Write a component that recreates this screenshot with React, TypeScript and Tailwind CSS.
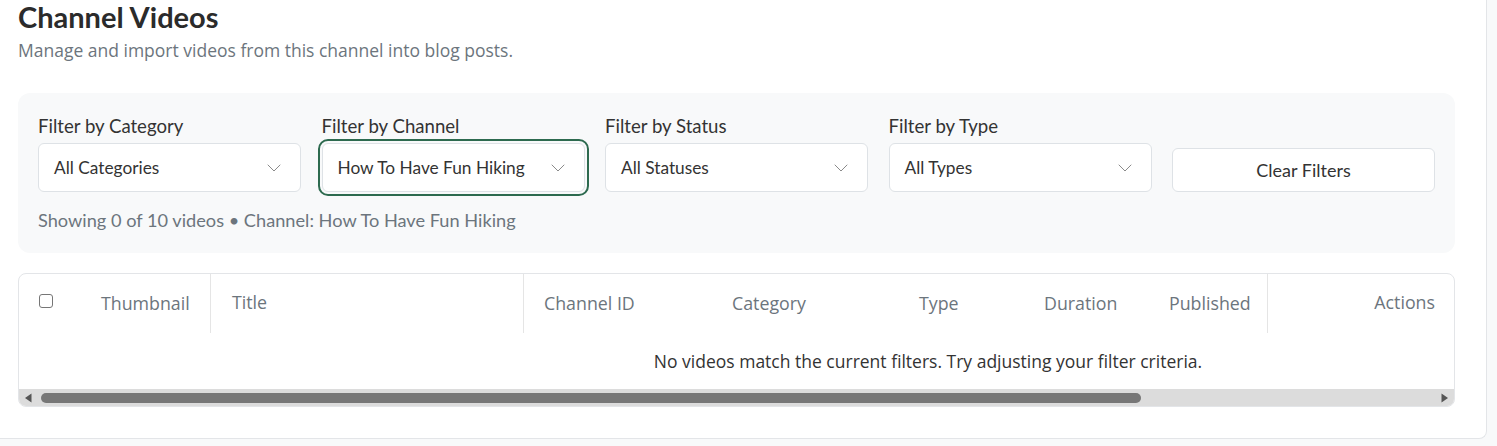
import { ChevronDown } from "lucide-react";

const filters = [
  { label: "Filter by Category", value: "All Categories" },
  { label: "Filter by Channel", value: "How To Have Fun Hiking", focused: true },
  { label: "Filter by Status", value: "All Statuses" },
  { label: "Filter by Type", value: "All Types" },
];

const lato = "font-['Lato','Open_Sans',sans-serif]";
const openSans = "font-['Open_Sans','Lato',sans-serif]";

function Select({ value, focused }: { value: string; focused?: boolean }) {
  return (
    <div
      className={`flex h-[49px] items-center justify-between rounded-md border border-[#dee2e6] bg-white pl-[15px] pr-[14px] text-[17.3px] text-[#333] ${
        focused ? "outline-2 outline-offset-2 outline-[#2d6a4f]" : ""
      }`}
    >
      <span>{value}</span>
      <ChevronDown className="h-6 w-6 text-[#8a8a8a]" strokeWidth={1} aria-hidden="true" />
    </div>
  );
}

export default function App() {
  return (
    <div className="h-[446px] w-[1497px] overflow-hidden bg-[#f8f9fa]">
      <div className="h-[439px] w-[1487px] rounded-br-lg border-r border-b border-[#e3e5e8] bg-white pt-[2px] pl-[18px] pr-[31px]">
        {/* Header */}
        <h1 className={`${lato} text-[29px] leading-[30px] font-bold text-[#2b2b2b]`}>
          Channel Videos
        </h1>
        <p className={`${openSans} mt-[5px] text-[17.5px] leading-[26px] text-[#6c757d]`}>
          Manage and import videos from this channel into blog posts.
        </p>

        {/* Filters */}
        <div className={`${lato} mt-[30px] rounded-xl bg-[#f8f9fa] px-5 pt-[21px] pb-[21px]`}>
          <div className="grid grid-cols-5 items-end gap-x-[20.5px]">
            {filters.map((f) => (
              <div key={f.label}>
                <label className="mb-[5px] block text-[18.6px] leading-[24px] text-[#333]">{f.label}</label>
                <Select value={f.value} focused={f.focused} />
              </div>
            ))}
            <button className="h-[44px] rounded-md border border-[#dee2e6] bg-white text-[18px] text-[#333]">
              Clear Filters
            </button>
          </div>
          <p className="mt-[16px] text-[18.2px] leading-6 text-[#6c757d]">
            Showing 0 of 10 videos • Channel: How To Have Fun Hiking
          </p>
        </div>

        {/* Table */}
        <div className={`${openSans} mt-5 overflow-hidden rounded-lg border border-[#e3e5e8]`}>
          <div className="w-[1818px]">
            <div className="flex h-[59px] items-center text-[17.8px] text-[#6c757d]">
              <div className="flex w-[62px] items-center pl-[20px]">
                <span className="-mt-[6px] block h-[14px] w-[14px] rounded-[3px] border border-[#767676] bg-white" />
              </div>
              <div className="w-[129px] pl-5">Thumbnail</div>
              <div className="h-full w-[313px] border-l border-[#e5e5e5] pl-[21px] leading-[57px]">Title</div>
              <div className="h-full w-[188px] border-l border-[#e5e5e5] pl-[20px] leading-[59px]">Channel ID</div>
              <div className="w-[187px] pl-[21px]">Category</div>
              <div className="w-[125px] pl-[21px]">Type</div>
              <div className="w-[125px] pl-[21px]">Duration</div>
              <div className="w-[119px] pl-[21px]">Published</div>
              <div className="h-full w-[188px] border-l border-[#e5e5e5] pr-[20px] text-right leading-[57px]">Actions</div>
              <div className="flex-1" />
            </div>
            <div className="flex h-[56px] items-center justify-center text-[17.5px] text-[#333]">
              No videos match the current filters. Try adjusting your filter criteria.
            </div>
          </div>
          {/* scrollbar */}
          <div className="flex h-[17px] items-center bg-[#dcdcdc] px-[5px]">
            <svg width="8" height="10" viewBox="0 0 8 10" aria-hidden="true">
              <path d="M7.5 0.5 L1 5 L7.5 9.5 Z" fill="#555" />
            </svg>
            <div className="ml-[9px] h-[10px] w-[1100px] rounded-full bg-[#777]" />
            <div className="flex-1" />
            <svg width="8" height="10" viewBox="0 0 8 10" aria-hidden="true">
              <path d="M0.5 0.5 L7 5 L0.5 9.5 Z" fill="#555" />
            </svg>
          </div>
        </div>
      </div>
    </div>
  );
}
